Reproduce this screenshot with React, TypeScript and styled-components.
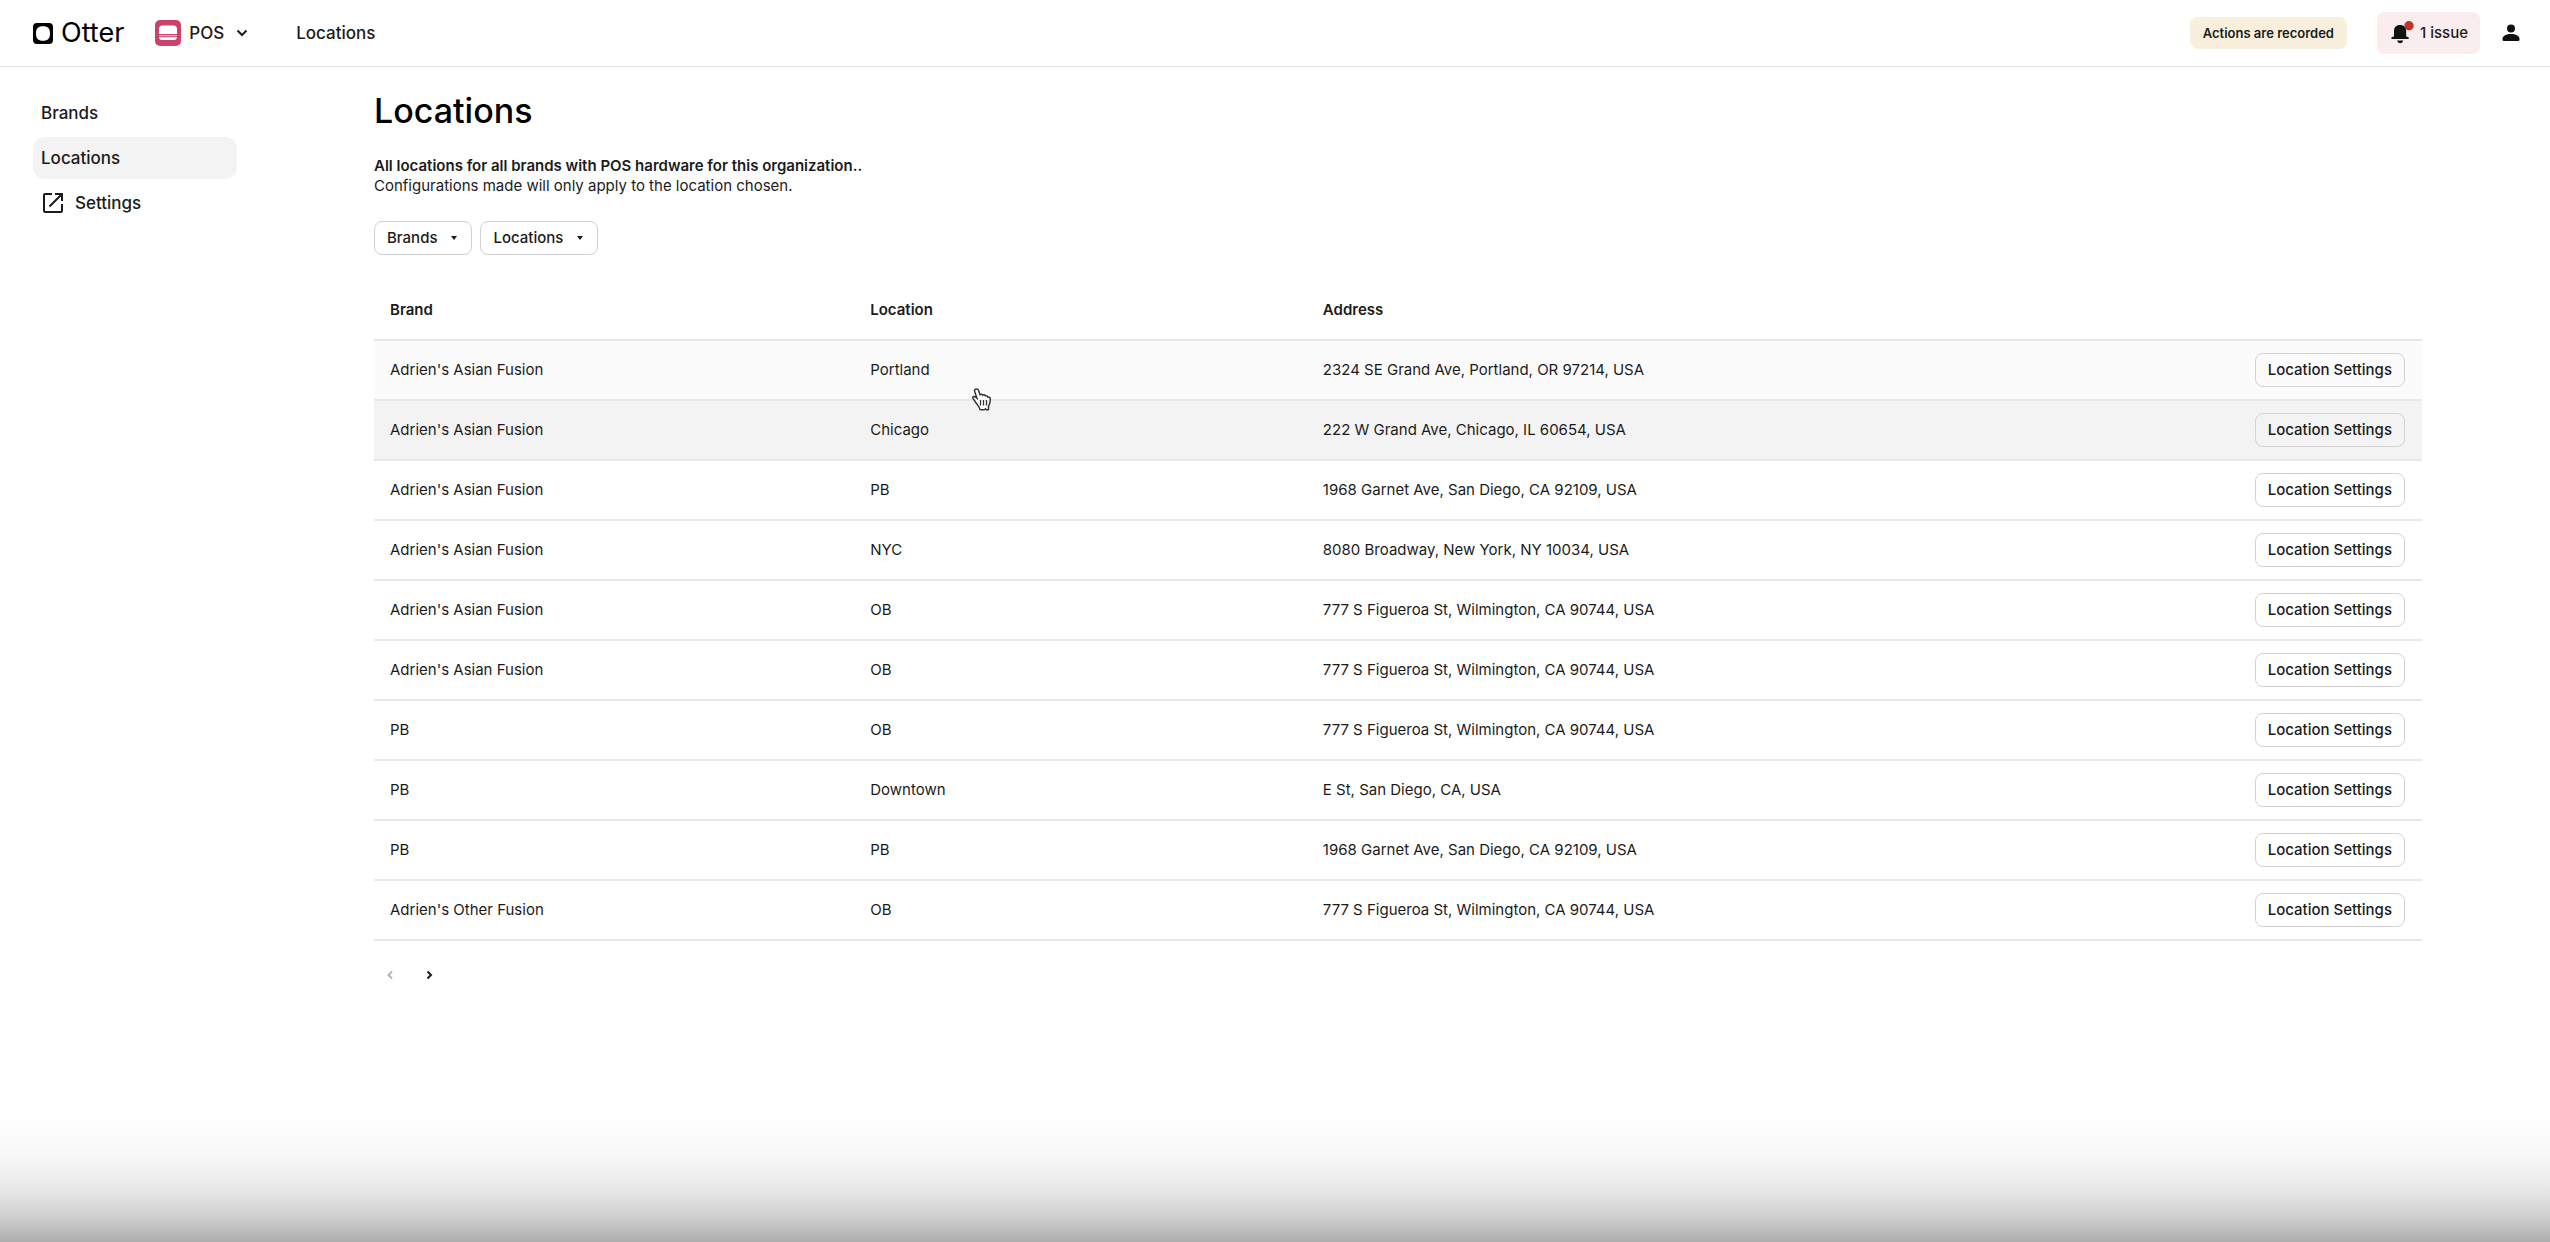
import React from "react";
import styled, { createGlobalStyle } from "styled-components";

const GlobalStyle = createGlobalStyle`
  *, *::before, *::after { box-sizing: border-box; }
  body {
    margin: 0;
    background: #ffffff;
    color: #1b1b1b;
    font-family: Inter, "Liberation Sans", sans-serif;
    font-size: 15px;
    line-height: 20px;
  }
  button { font: inherit; color: inherit; cursor: pointer; }
  a { color: inherit; text-decoration: none; }
`;

const Page = styled.div`
  position: relative;
  display: flex;
  flex-direction: column;
  min-height: 100vh;
`;

const TopBar = styled.header`
  display: flex;
  align-items: center;
  height: 67px;
  padding: 0 27px 0 33px;
  border-bottom: 1px solid #e6e6e6;
`;

const Logo = styled.a`
  display: flex;
  align-items: center;
  gap: 8px;
  margin-right: 31px;
  color: #000000;
  font-size: 27px;
  line-height: 32px;
`;

const ProductButton = styled.button`
  display: flex;
  align-items: center;
  gap: 8px;
  padding: 0;
  border: 0;
  background: none;
  font-size: 17px;
  font-weight: 500;
`;

const Crumb = styled.span`
  margin-left: 44px;
  font-size: 17px;
  font-weight: 500;
`;

const TopActions = styled.div`
  display: flex;
  align-items: center;
  margin-left: auto;
`;

const RecordedTag = styled.span`
  padding: 6px 13px;
  border-radius: 8px;
  background: #f8f0dd;
  font-size: 13px;
  font-weight: 600;
`;

const IssueButton = styled.button`
  display: flex;
  align-items: center;
  gap: 6px;
  height: 42px;
  margin: 0 19px 0 30px;
  padding: 0 12px 0 13px;
  border: 0;
  border-radius: 8px;
  background: #f9eded;
  font-size: 15px;
  font-weight: 500;
`;

const AccountButton = styled.button`
  display: flex;
  padding: 0;
  border: 0;
  background: none;
`;

const Body = styled.div`
  display: flex;
  flex: 1;
`;

const Sidebar = styled.nav`
  display: flex;
  flex-direction: column;
  flex: 0 0 237px;
  gap: 3px;
  padding: 25px 0 0 33px;
`;

const NavItem = styled.a<{ $active?: boolean }>`
  display: flex;
  align-items: center;
  gap: 10px;
  height: 42px;
  padding: 0 8px;
  border-radius: 12px;
  background: ${(p) => (p.$active ? "#f3f3f3" : "transparent")};
  font-size: 17px;
  font-weight: 500;
`;

const Main = styled.main`
  flex: 1;
  min-width: 0;
  padding: 22px 128px 0 137px;
`;

const Title = styled.h1`
  margin: 0;
  color: #000000;
  font-size: 34px;
  font-weight: 500;
  line-height: 44px;
`;

const Intro = styled.p<{ $strong?: boolean }>`
  margin: 0;
  font-weight: ${(p) => (p.$strong ? 600 : 400)};
`;

const IntroBlock = styled.div`
  padding: 23px 0 25px;
`;

const Filters = styled.div`
  display: flex;
  gap: 8px;
`;

const OutlineButton = styled.button`
  display: inline-flex;
  align-items: center;
  gap: 12px;
  height: 34px;
  padding: 0 12px;
  border: 1px solid #d2d2d2;
  border-radius: 8px;
  background: transparent;
  font-weight: 500;
  white-space: nowrap;
`;

const Table = styled.table`
  width: 100%;
  margin-top: 25px;
  border-collapse: collapse;
  table-layout: fixed;
`;

const Column = styled.col<{ $width: string }>`
  width: ${(p) => p.$width};
`;

const HeadCell = styled.th`
  height: 60px;
  padding: 0 16px;
  border-bottom: 2px solid #e8e8e8;
  font-weight: 600;
  text-align: left;
`;

const Row = styled.tr<{ $tone: string }>`
  background: ${(p) => p.$tone};
`;

const Cell = styled.td<{ $end?: boolean }>`
  height: 60px;
  padding: 0 17px 0 16px;
  border-bottom: 2px solid #e8e8e8;
  text-align: ${(p) => (p.$end ? "right" : "left")};
`;

const Pager = styled.div`
  display: flex;
  gap: 23px;
  padding: 24px 8px;
`;

const PageButton = styled.button`
  display: flex;
  padding: 0;
  border: 0;
  background: none;
  &:disabled { color: #b5b5b5; }
`;

const BottomFade = styled.div`
  position: absolute;
  inset: auto 0 0;
  height: 150px;
  pointer-events: none;
  background: linear-gradient(
    rgba(0, 0, 0, 0) 0%,
    rgba(0, 0, 0, 0.004) 17%,
    rgba(0, 0, 0, 0.014) 32%,
    rgba(0, 0, 0, 0.035) 45%,
    rgba(0, 0, 0, 0.075) 59%,
    rgba(0, 0, 0, 0.115) 70%,
    rgba(0, 0, 0, 0.18) 82%,
    rgba(0, 0, 0, 0.255) 92%,
    rgba(0, 0, 0, 0.32) 100%
  );
`;

const Pointer = styled.svg`
  position: absolute;
  left: 970px;
  top: 387px;
`;

const rows = [
  ["Adrien's Asian Fusion", "Portland", "2324 SE Grand Ave, Portland, OR 97214, USA"],
  ["Adrien's Asian Fusion", "Chicago", "222 W Grand Ave, Chicago, IL 60654, USA"],
  ["Adrien's Asian Fusion", "PB", "1968 Garnet Ave, San Diego, CA 92109, USA"],
  ["Adrien's Asian Fusion", "NYC", "8080 Broadway, New York, NY 10034, USA"],
  ["Adrien's Asian Fusion", "OB", "777 S Figueroa St, Wilmington, CA 90744, USA"],
  ["Adrien's Asian Fusion", "OB", "777 S Figueroa St, Wilmington, CA 90744, USA"],
  ["PB", "OB", "777 S Figueroa St, Wilmington, CA 90744, USA"],
  ["PB", "Downtown", "E St, San Diego, CA, USA"],
  ["PB", "PB", "1968 Garnet Ave, San Diego, CA 92109, USA"],
  ["Adrien's Other Fusion", "OB", "777 S Figueroa St, Wilmington, CA 90744, USA"],
];

const tones = ["#fbfbfb", "#f3f3f3"];

const Caret = () => (
  <svg width="10" height="10" viewBox="0 0 10 10" aria-hidden="true">
    <path d="M2 3h6L5 7z" fill="currentColor" />
  </svg>
);

export default function App() {
  return (
    <Page>
      <GlobalStyle />
      <TopBar>
        <Logo href="#">
          <svg width="20" height="21" viewBox="0 0 20 21" aria-hidden="true">
            <path
              fillRule="evenodd"
              d="M4 0h12a4 4 0 0 1 4 4v13a4 4 0 0 1-4 4H4a4 4 0 0 1-4-4V4a4 4 0 0 1 4-4zM10 3.200C5 3.200 3 5.500 3 10.500S5 17.800 10 17.800s7-2.300 7-7.300S15 3.200 10 3.200z"
            />
          </svg>
          Otter
        </Logo>
        <ProductButton type="button">
          <svg width="26" height="26" viewBox="0 0 26 26" aria-hidden="true">
            <rect width="26" height="26" rx="5" fill="#cb426b" />
            <path d="M4 14V9a3.500 3.500 0 0 1 3.500-3.500h11A3.500 3.500 0 0 1 22 9v5z" fill="#fff" />
            <path d="M4 15.700h18" stroke="#f3c9d6" strokeWidth="1" />
            <path d="M4 17.300h18a3 3 0 0 1-3 2.700H7a3 3 0 0 1-3-2.700z" fill="#fff" />
          </svg>
          POS
          <svg width="20" height="24" viewBox="0 0 20 24" fill="none" stroke="currentColor" strokeWidth="2" aria-hidden="true">
            <path d="M5.500 9.500l4.500 4.500 4.500-4.500" />
          </svg>
        </ProductButton>
        <Crumb>Locations</Crumb>
        <TopActions>
          <RecordedTag>Actions are recorded</RecordedTag>
          <IssueButton type="button">
            <svg width="24" height="24" viewBox="0 0 24 24" aria-hidden="true">
              <path d="M4 15.500V10c0-3.500 2-6 6-6s6.200 2.500 6.200 6v5.500l2.300.8c.6.300.5 1.700-.3 1.700H2c-.8 0-.9-1.400-.3-1.700zM7.200 19.500h6c-.4 1.900-1.500 2.700-3 2.700s-2.600-.8-3-2.700z" fill="#111" />
              <circle cx="19" cy="4.700" r="4.700" fill="#c0312f" />
            </svg>
            1 issue
          </IssueButton>
          <AccountButton type="button" aria-label="Account">
            <svg width="24" height="24" viewBox="0 0 24 24" fill="#111" aria-hidden="true">
              <circle cx="12" cy="7.500" r="4" />
              <path d="M3.500 18c0-3.200 4-5 8.500-5s8.500 1.800 8.500 5v.5A1.500 1.500 0 0 1 19 20H5a1.500 1.500 0 0 1-1.500-1.500z" />
            </svg>
          </AccountButton>
        </TopActions>
      </TopBar>
      <Body>
        <Sidebar>
          <NavItem href="#">Brands</NavItem>
          <NavItem href="#" $active>Locations</NavItem>
          <NavItem href="#">
            <svg width="24" height="24" viewBox="0 0 24 24" fill="currentColor" aria-hidden="true">
              <path d="M20 20H4V4h7V2H4a2 2 0 0 0-2 2v16a2 2 0 0 0 2 2h16c1.100 0 2-.9 2-2v-7h-2v7zM14 2v2h4.590L7.760 14.830l1.410 1.410L20 5.410V10h2V2h-8z" />
            </svg>
            Settings
          </NavItem>
        </Sidebar>
        <Main>
          <Title>Locations</Title>
          <IntroBlock>
            <Intro $strong>All locations for all brands with POS hardware for this organization..</Intro>
            <Intro>Configurations made will only apply to the location chosen.</Intro>
          </IntroBlock>
          <Filters>
            <OutlineButton type="button">Brands <Caret /></OutlineButton>
            <OutlineButton type="button">Locations <Caret /></OutlineButton>
          </Filters>
          <Table>
            <colgroup>
              <Column $width="23.45%" />
              <Column $width="22.1%" />
              <Column $width="auto" />
              <Column $width="184px" />
            </colgroup>
            <thead>
              <tr>
                <HeadCell>Brand</HeadCell>
                <HeadCell>Location</HeadCell>
                <HeadCell>Address</HeadCell>
                <HeadCell aria-label="Actions" />
              </tr>
            </thead>
            <tbody>
              {rows.map(([brand, location, address], i) => (
                <Row key={i} $tone={tones[i] ?? "transparent"}>
                  <Cell>{brand}</Cell>
                  <Cell>{location}</Cell>
                  <Cell>{address}</Cell>
                  <Cell $end>
                    <OutlineButton type="button">Location Settings</OutlineButton>
                  </Cell>
                </Row>
              ))}
            </tbody>
          </Table>
          <Pager>
            <PageButton type="button" disabled aria-label="Previous page">
              <svg width="16" height="20" viewBox="0 0 16 20" fill="none" stroke="currentColor" strokeWidth="2" aria-hidden="true">
                <path d="M10 6.500L6.500 10l3.500 3.500" />
              </svg>
            </PageButton>
            <PageButton type="button" aria-label="Next page">
              <svg width="16" height="20" viewBox="0 0 16 20" fill="none" stroke="currentColor" strokeWidth="2" aria-hidden="true">
                <path d="M6.500 6.500L10 10l-3.500 3.500" />
              </svg>
            </PageButton>
          </Pager>
        </Main>
      </Body>
      <BottomFade />
      <Pointer width="24" height="26" viewBox="0 0 24 26" aria-hidden="true">
        <path
          d="M5.500 2.300c1.300-.8 2.700-.2 3.100 1.200l1.500 4.200c.9-.7 2.100-.5 2.600.4 1-.6 2.200-.3 2.600.7 1.100-.4 2.200.1 2.500 1.200 1.400-.2 2.500.6 2.500 2.100 0 3-.4 5-1.800 7.200v3.200c-1.200.6-2.300.2-3-.6-.6 1-3.200 1-5.500.7-.6-3.200-3-5-5-8.300-1-1.600-2.500-2.700-2.300-3.900.2-1.100 1.600-1.300 3-.2l1.200 1-2.300-7c-.3-.9 0-1.600.9-1.900z"
          fill="#fff"
          stroke="#333"
          strokeWidth="1.500"
        />
        <path d="M10.500 13v5.500M13.500 13v5.500M16.500 13v5.500" stroke="#333" strokeWidth="1.300" />
      </Pointer>
    </Page>
  );
}
